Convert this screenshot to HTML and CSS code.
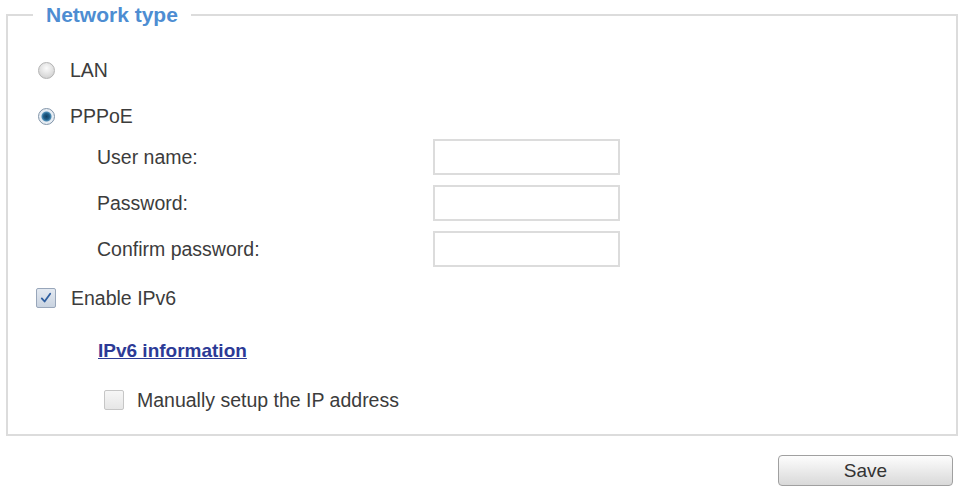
FILE: index.html
```html
<!DOCTYPE html>
<html lang="en">
<head>
<meta charset="utf-8">
<title>Network type</title>
<link rel="stylesheet" href="styles.css">
</head>
<body>
<div class="page">
  <fieldset class="box">
    <legend class="title">Network type</legend>
    <div class="body">
      <label class="opt opt-radio"><span class="radio"></span><span class="txt">LAN</span></label>
      <label class="opt opt-radio gap16"><span class="radio on"></span><span class="txt">PPPoE</span></label>
      <div class="creds">
        <span class="lbl">User name:</span><input class="field" type="text">
        <span class="lbl">Password:</span><input class="field" type="password">
        <span class="lbl">Confirm password:</span><input class="field" type="password">
      </div>
      <label class="opt opt-check gap16"><span class="check on"><svg viewBox="0 0 20 20" width="14" height="14"><path d="M4 10.5 L8 15 L16 4" fill="none" stroke="#2f5fa0" stroke-width="2.6" stroke-linecap="round" stroke-linejoin="round"/></svg></span><span class="txt">Enable IPv6</span></label>
      <div class="linkrow"><a class="link" href="#">IPv6 information</a></div>
      <label class="opt opt-sub"><span class="check"></span><span class="txt">Manually setup the IP address</span></label>
    </div>
  </fieldset>
  <div class="actions"><button class="save" type="button">Save</button></div>
</div>
</body>
</html>
```
FILE: styles.css
```css
* { box-sizing: border-box; }
html, body { margin: 0; padding: 0; background: #fff; }
body {
  font-family: "Liberation Sans", Arial, sans-serif;
  font-size: 19.5px;
  color: #3c3c3c;
}
.page { padding: 3px 2px 0 6px; }
.box {
  margin: 0;
  padding: 0;
  min-width: 0;
  border: 2px solid #dcdcdc;
}
.title {
  margin-left: 25px;
  padding: 0 13px;
  font-size: 21px;
  line-height: 24px;
  font-weight: bold;
  color: #4d8dd2;
}
.body {
  display: flex;
  flex-direction: column;
  align-items: flex-start;
  padding: 28px 0 19px 0;
}
.opt {
  display: flex;
  align-items: center;
  height: 30px;
}
.opt-radio { margin-left: 30px; }
.opt-radio .txt { margin-left: 15px; }
.gap16 { margin-top: 16px; }
.radio {
  width: 17px;
  height: 17px;
  border-radius: 50%;
  border: 1px solid #b3b3b3;
  background: radial-gradient(circle at 50% 35%, #fbfbfb 0, #e2e2e2 50%, #c8c8c8 100%);
}
.radio.on {
  border-color: #7f93a8;
  background: radial-gradient(circle at 50% 50%, #123f63 0, #1f5f8a 3px, #4f8db5 4.5px, #e4ebf2 5.5px, #f2f5f8 100%);
}
.creds {
  margin-top: 8px;
  margin-left: 89px;
  display: grid;
  grid-template-columns: 336px 187px;
  grid-auto-rows: 36px;
  row-gap: 10px;
  align-items: center;
}
.field {
  height: 36px;
  width: 187px;
  margin: 0;
  border: 2px solid #dcdcdc;
  background: #fff;
  font: inherit;
  padding: 0 6px;
}
.opt-check { margin-left: 28px; }
.opt-check .txt { margin-left: 15px; }
.check {
  width: 20px;
  height: 20px;
  border: 1px solid #c6c6c6;
  border-radius: 2px;
  background: linear-gradient(#f6f6f6, #e6e6e6);
  display: flex;
  align-items: center;
  justify-content: center;
}
.check.on {
  border-color: #98a6ba;
  background: linear-gradient(#e3e9f1, #c9d3e0);
}
.linkrow {
  margin-top: 23px;
  margin-left: 90px;
  height: 30px;
  display: flex;
  align-items: center;
}
.link {
  color: #2c3a96;
  font-weight: bold;
  font-size: 19px;
  text-decoration: underline;
}
.opt-sub { margin-top: 19px; margin-left: 96px; }
.opt-sub .txt { margin-left: 13px; }
.actions {
  display: flex;
  justify-content: flex-end;
  margin-top: 19px;
  padding-right: 5px;
}
.save {
  width: 175px;
  height: 31px;
  border: 1px solid #a0a0a0;
  border-radius: 4px;
  background: linear-gradient(#fdfdfd, #ebebeb 50%, #d9d9d9);
  font-family: "Liberation Sans", Arial, sans-serif;
  font-size: 19px;
  color: #333;
  padding: 0;
}
```
